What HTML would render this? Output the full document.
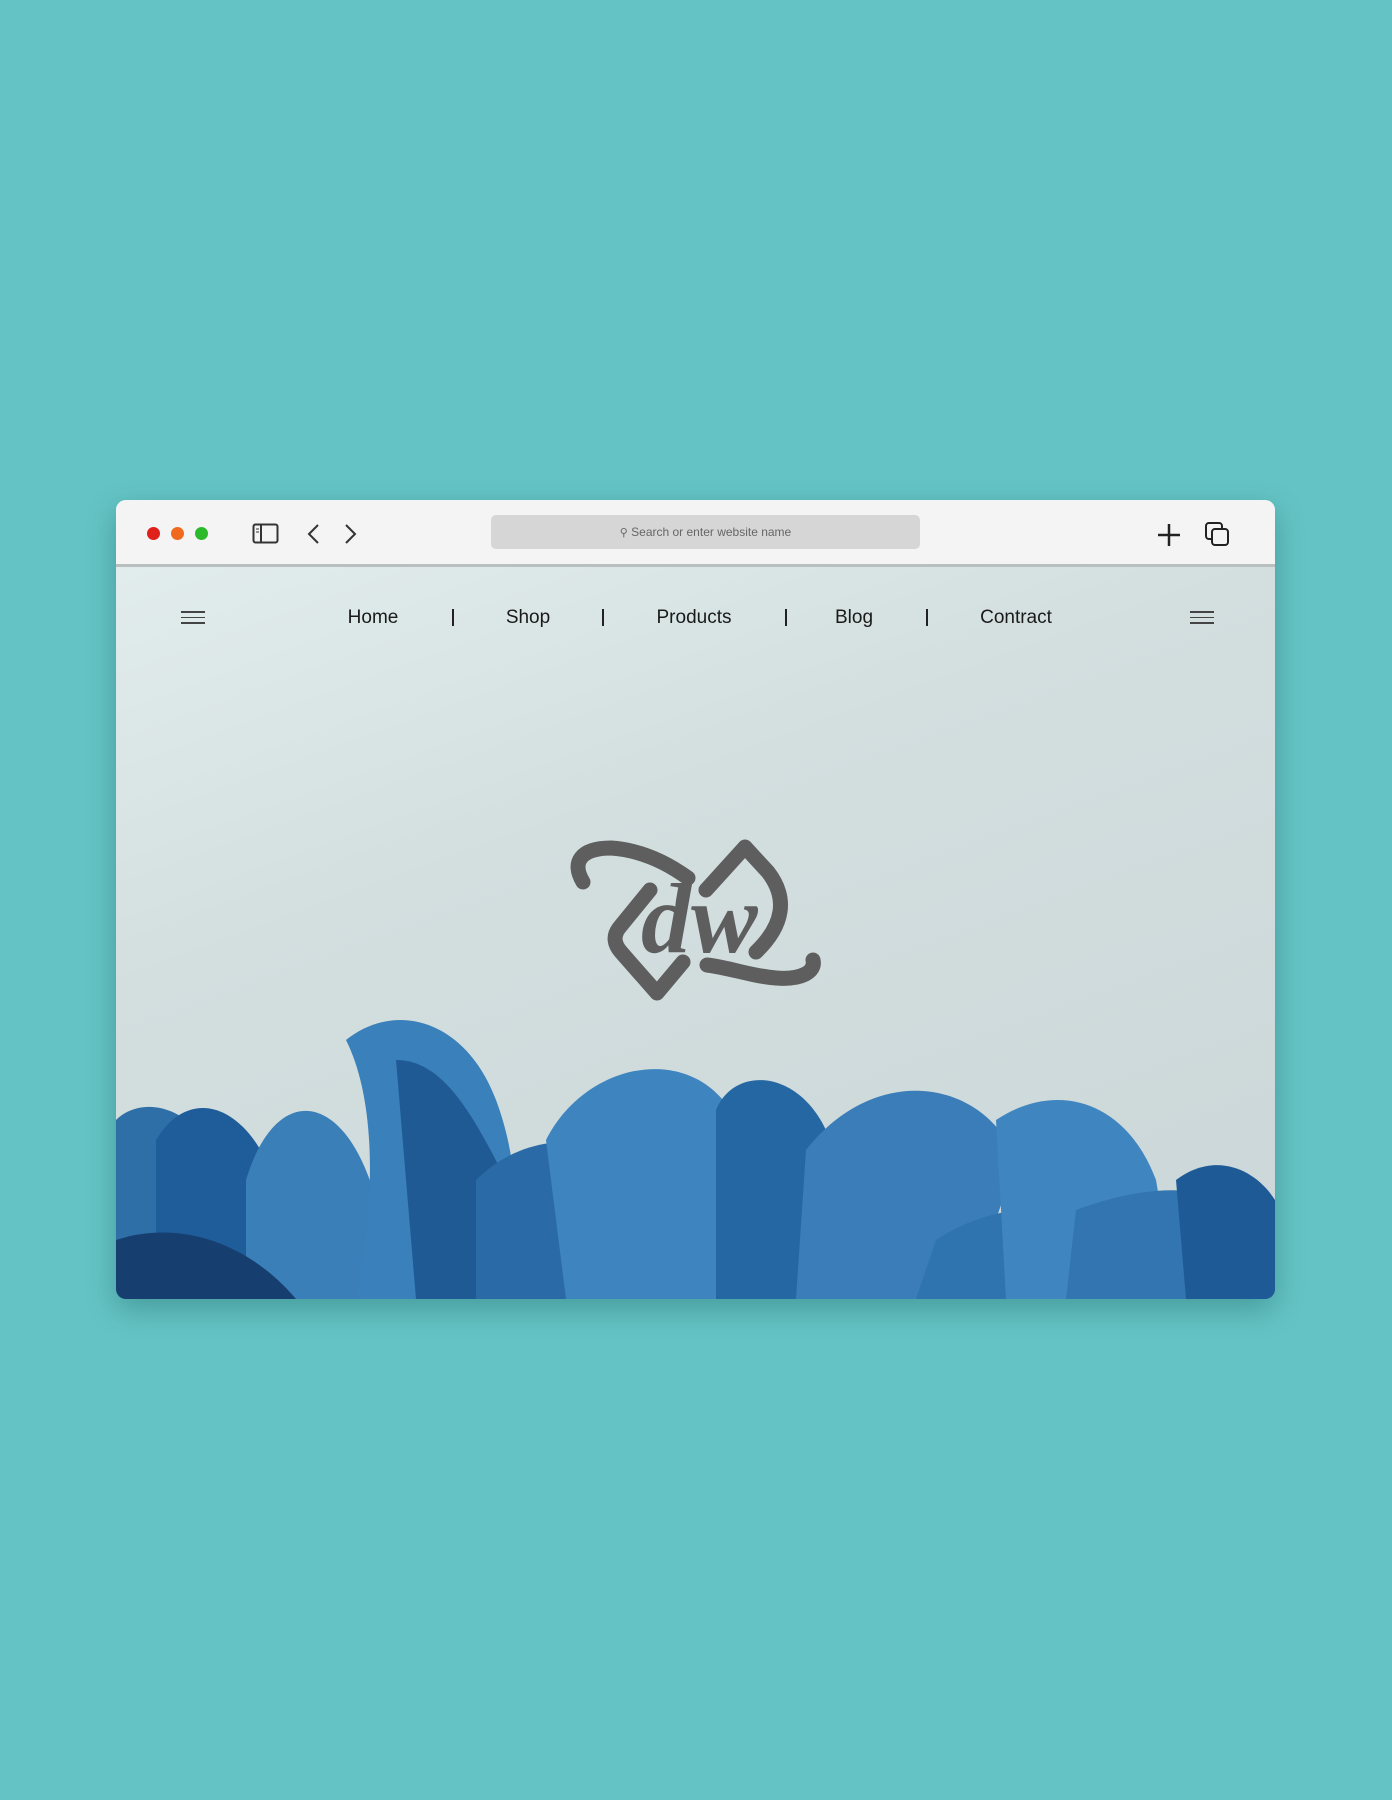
<!DOCTYPE html>
<html><head><meta charset="utf-8"><style>
body{margin:0;width:1392px;height:1800px;background:#64c4c5;position:relative;overflow:hidden;font-family:"Liberation Sans",sans-serif}
.win{position:absolute;left:116px;top:500px;width:1159px;height:799px;border-radius:10px;overflow:hidden;box-shadow:0 10px 30px rgba(0,60,60,.3);background:linear-gradient(160deg,#e4eeee 0%,#d3dfdf 40%,#cbd6d8 100%)}
.bar{position:absolute;left:0;top:0;right:0;height:64px;background:#f4f4f4;border-bottom:3px solid #b9bfbf}
.dot{position:absolute;top:27px;width:13px;height:13px;border-radius:50%}
.addr{position:absolute;left:375px;top:15px;width:429px;height:34px;background:#d6d6d6;border-radius:5px;font-size:12px;color:#666;text-align:center;line-height:34px}
.nav{position:absolute;top:107px;font-size:19px;color:#1a1a1a;transform:translateX(-50%)}
.sep{position:absolute;top:109px;width:2px;height:17px;background:#222}
.ham{position:absolute;top:111px;width:24px}
.ham i{display:block;height:1.5px;background:#444;margin-bottom:4px}
</style></head><body>
<div class="win">
<div class="bar">
<div class="dot" style="left:31px;background:#e0201a"></div>
<div class="dot" style="left:55px;background:#ef6a1e"></div>
<div class="dot" style="left:79px;background:#2dba2a"></div>
<svg style="position:absolute;left:136px;top:23px" width="28" height="22" viewBox="0 0 28 22"><rect x="1.5" y="1.5" width="24" height="18" rx="2" fill="none" stroke="#333" stroke-width="2"/><line x1="9" y1="2" x2="9" y2="19" stroke="#333" stroke-width="2"/><line x1="4" y1="6" x2="7" y2="6" stroke="#333"/><line x1="4" y1="9" x2="7" y2="9" stroke="#333"/></svg>
<svg style="position:absolute;left:188px;top:22px" width="80" height="24"><path d="M14 3 L5 12 L14 21" fill="none" stroke="#333" stroke-width="2"/><path d="M42 3 L51 12 L42 21" fill="none" stroke="#333" stroke-width="2"/></svg>
<div class="addr"><span style="font-size:11px">&#9906;</span> Search or enter website name</div>
<svg style="position:absolute;left:1040px;top:22px" width="26" height="26"><path d="M13 2V24M2 13H24" stroke="#222" stroke-width="2.5"/></svg>
<svg style="position:absolute;left:1088px;top:21px" width="28" height="28"><rect x="2" y="2" width="16" height="16" rx="3" fill="none" stroke="#222" stroke-width="2"/><rect x="8" y="8" width="16" height="16" rx="3" fill="#f4f4f4" stroke="#222" stroke-width="2"/></svg>
</div>
<div class="ham" style="left:65px"><i></i><i></i><i></i></div>
<div class="ham" style="left:1074px"><i></i><i></i><i></i></div>
<div class="nav" style="left:257px">Home</div>
<div class="sep" style="left:336px"></div>
<div class="nav" style="left:412px">Shop</div>
<div class="sep" style="left:486px"></div>
<div class="nav" style="left:578px">Products</div>
<div class="sep" style="left:669px"></div>
<div class="nav" style="left:738px">Blog</div>
<div class="sep" style="left:810px"></div>
<div class="nav" style="left:900px">Contract</div>
<svg style="position:absolute;left:0;top:0" width="1159" height="799" viewBox="0 0 1159 799">
<g fill="none" stroke="#5e5e5e" stroke-width="15" stroke-linecap="round" stroke-linejoin="round">
<path d="M467 382 C455 362 465 348 495 348 C525 350 550 362 572 378"/>
<path d="M534 390 L503 428 C497 436 498 444 505 452 L541 493 L567 462"/>
<path d="M590 390 L629 347 L652 372 C672 398 668 425 640 452"/>
<path d="M591 465 C615 468 635 476 660 478 C685 480 700 472 697 460"/>
</g>
<text x="525" y="452" font-family="Liberation Serif,serif" font-style="italic" font-weight="bold" font-size="100" fill="#5e5e5e">dw</text>
<g>
<path d="M0 620 C20 600 60 600 90 640 L100 799 L0 799Z" fill="#2e6fa8"/>
<path d="M40 640 C70 590 120 600 150 660 L170 799 L40 799Z" fill="#1f5d9a"/>
<path d="M130 680 C160 580 230 590 260 700 L280 799 L130 799Z" fill="#3b7fb8"/>
<path d="M230 540 C280 500 350 520 380 600 C410 680 400 760 380 799 L240 799 C260 700 260 600 230 540Z" fill="#3a80bb"/>
<path d="M280 560 C330 560 360 620 400 700 L420 799 L300 799Z" fill="#1f5a94"/>
<path d="M360 680 C420 620 520 630 560 720 L580 799 L360 799Z" fill="#2a6aa6"/>
<path d="M430 640 C470 560 580 540 620 620 C650 680 640 760 630 799 L450 799Z" fill="#3e85bf"/>
<path d="M600 610 C620 560 700 570 720 660 L740 799 L600 799Z" fill="#2467a3"/>
<path d="M690 650 C760 560 870 580 900 660 C880 720 860 780 850 799 L680 799Z" fill="#3b7db8"/>
<path d="M820 740 C880 700 960 700 1000 730 L1010 799 L800 799Z" fill="#2f73af"/>
<path d="M880 620 C940 580 1010 600 1040 680 L1060 799 L890 799Z" fill="#3f86c0"/>
<path d="M960 710 C1040 680 1120 680 1159 740 L1159 799 L950 799Z" fill="#3375b1"/>
<path d="M1060 680 C1100 650 1140 670 1159 700 L1159 799 L1070 799Z" fill="#1e5b96"/>
<path d="M0 740 C60 720 130 740 180 799 L0 799Z" fill="#163f70"/>
</g>
</svg>
</div>
</body></html>
